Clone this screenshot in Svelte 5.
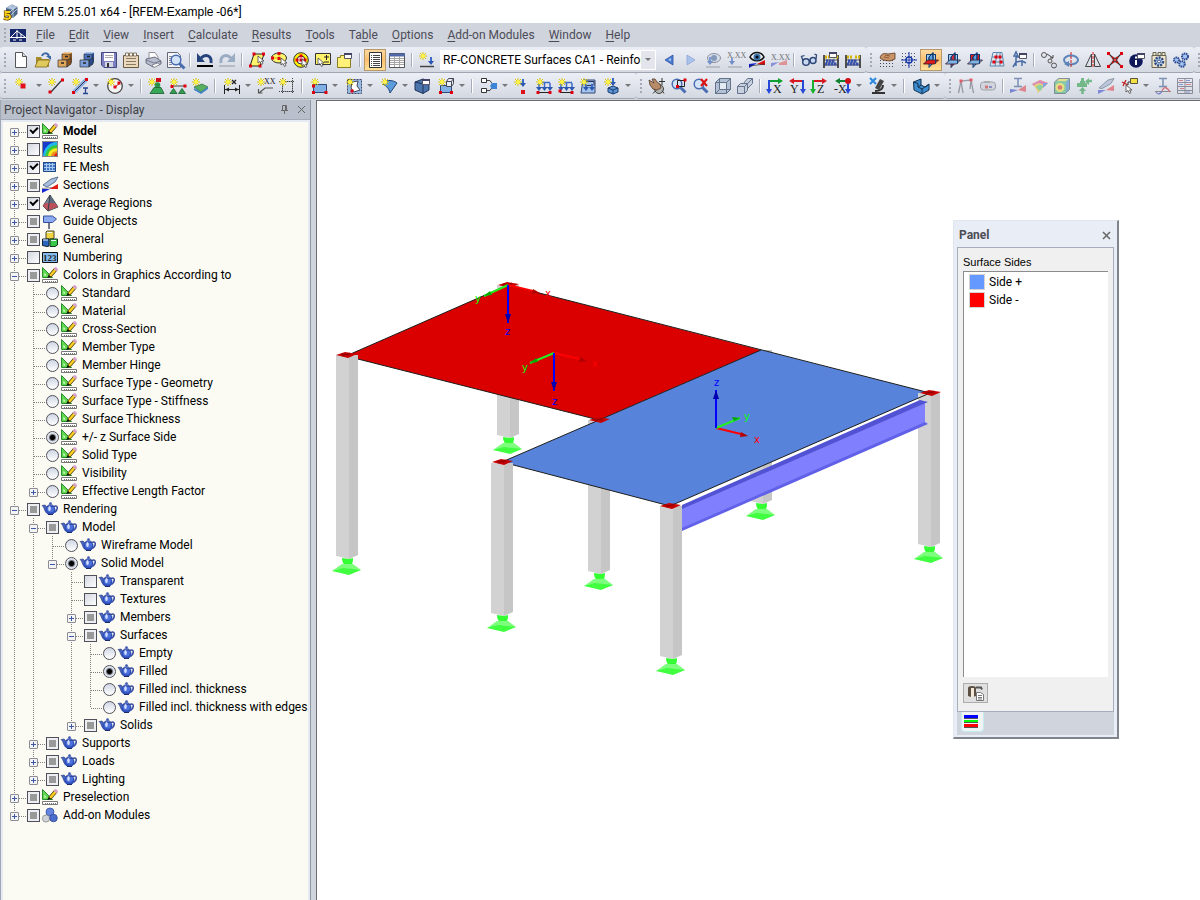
<script lang="ts">
  interface TreeNode {
    label: string;
    icon: string;
    state?: 'on' | 'off' | 'mixed';
    radio?: string;
    bold?: boolean;
    children?: TreeNode[];
    closed?: boolean;
  }

  interface Row {
    node: TreeNode;
    id: string;
    guides: boolean[];
    first: boolean;
    last: boolean;
  }

  interface Tool {
    kind: 'icon' | 'split' | 'sep' | 'case';
    icon?: string;
    active?: boolean;
    dim?: boolean;
  }

  // Shared icon fragments
  const star = (x = 4, y = 4) =>
    `<path d="M${x} ${y - 4}v8M${x - 4} ${y}h8M${x - 3} ${y - 3}l6 6M${x + 3} ${y - 3}l-6 6" stroke="#d8c400"/><circle cx="${x}" cy="${y}" r="2" fill="#fff44a"/>`;
  const node = (x: number, y: number) => `<path d="M${x - 1.5} ${y - 1.5}h3v3h-3z" fill="#e00010"/>`;
  const cursor = (x: number, y: number) =>
    `<path d="M${x} ${y}v7l2-1.5 1.5 3 1.5-1-1.5-2.5h2.5z" fill="#fff" stroke="#444" stroke-width=".8"/>`;
  const windowBox = (x: number, y: number) =>
    `<path d="M${x - 0.5} ${y + 0.5}h7v5h-7z" fill="#fff" stroke="#556"/><path d="M${x - 1} ${y + 1}h8" stroke="#446" stroke-width="2"/>`;
  const down = (x: number, y: number, h = 6) =>
    `<path d="M${x} ${y}v${h}" stroke="#3c6cc8" stroke-width="2"/><path d="M${x - 3} ${y + h - 2}h6l-3 4z" fill="#2c58b0"/>`;
  const cabinet = (light: string, base: string, dark: string) =>
    `<path d="M5 2l2-1h8v9l-2 3H5z" fill="${dark}"/><path d="M5 2h8v6H5z" fill="${base}" stroke="#333" stroke-width=".7"/><path d="M5 2l2-1.500h8.500L13 2z" fill="${light}"/><path d="M1 8h9v7H1z" fill="${light}" stroke="#333" stroke-width=".7"/><path d="M10 8l4-2v6l-4 3z" fill="${dark}" stroke="#333" stroke-width=".7"/><path d="M4 11h3M8 4.500h3" stroke="#222" stroke-width="1.500"/>`;
  const planes = (flat: string, side: string, front: string) =>
    `<path d="M3.500 2.500h9v9h-9z" fill="${front}" stroke="#123a70"/><path d="M6 5l4-4.500V11l-4 4.500z" fill="${side}" stroke="#123a70"/><path d="M.5 12l4-4h11l-4 4z" fill="${flat}" stroke="#301828" stroke-width=".8"/><path d="M8 2.500h4.500V11M6 8V5l4-4v6" stroke="#123a70"/>`;
  const abacus = `<path d="M1 16V3M15 16V3" stroke="#222" stroke-width="1.500"/><path d="M1 8h14M1 13h14" stroke="#333" stroke-width=".8"/><path d="M2 5h5M10 5h5" stroke="#d4b400" stroke-width="3" stroke-dasharray="2 1"/><path d="M3 9h9M2 12h12" stroke="#3850a8" stroke-width="3" stroke-dasharray="2.500 .5"/>`;
  const bars = `<path d="M3 4.500h11M3 5v6M14 5v6M8.500 5v6" stroke="#3c6cc8" stroke-width="1.500"/><path d="M0 9h6l-3 4zM5.500 9h6l-3 4zM11 9h6l-3 4z" fill="#2c58b0"/><path d="M2 14.500h12" stroke="#222"/>`;
  const lens = (x: number, y: number) =>
    `<path d="M${x + 3} ${y + 3}l5.500 5.500" stroke="#4a6cb0" stroke-width="3"/><circle cx="${x}" cy="${y}" r="4.800" fill="#d4e4f8" stroke="#4a6cb0" stroke-width="1.500"/>`;
  const axis = (letter: string, a: string, b: string, flip = false) =>
    flip
      ? `<path d="M13 3H5" stroke="${a}" stroke-width="2"/><path d="M5 0v6L0 3z" fill="${a}"/><path d="M14 2v10" stroke="${b}" stroke-width="2"/><path d="M11 11h6l-3 5z" fill="${b}"/><text x="1" y="15" class="serif">${letter}</text>`
      : `<path d="M3 3h8" stroke="${a}" stroke-width="2"/><path d="M11 0v6l5-3z" fill="${a}"/><path d="M2 2v10" stroke="${b}" stroke-width="2"/><path d="M-1 11h6l-3 5z" fill="${b}"/><text x="6" y="15" class="serif">${letter}</text>`;

  const icons: Record<string, string> = {
    logo: `<path d="M4 4l6-3.500L15.500 3v7L11 14l-7-2z" fill="#4c6488"/><path d="M4 4l6-3.500L15.500 3 11 6z" fill="#a9bdd6"/><path d="M8 8l5-5M9 11l6-6M11 6v8M7 2.500l5 3" stroke="#c8d6e8" stroke-width=".8"/><path d="M8 8H3.500v3c3-1 4.500 0 4.500 2s-4 2.500-6 1" stroke="#5a4500" stroke-width="3.200"/><path d="M8 8H3.500v3c3-1 4.500 0 4.500 2s-4 2.500-6 1" stroke="#ffd21c" stroke-width="1.800"/>`,
    bridge: `<path d="M0 2h16v13H0z" fill="#18286c"/><path d="M0 10.500h16M7 3v9M7 4L1 10M7 4l8 6M11 7v4M9 13h3M3 13h3" stroke="#fff"/>`,
    new: `<path d="M3 .5h6.500l4 4v11H2.500V.5z" fill="#fff" stroke="#555"/><path d="M9.500 .5v4h4" fill="#ddd" stroke="#555"/>`,
    open: `<path d="M1 15V5h5l1 2h7v8z" fill="#a88c2c"/><path d="M0 15l3-7h12l-3 7z" fill="#e0ca5c" stroke="#806a20" stroke-width=".8"/><path d="M7 4c1-3 5-4 7 0" stroke="#3c68a8" stroke-width="2"/><path d="M11 4h5v4z" fill="#3c68a8"/>`,
    cabinetOrange: cabinet('#e0a85c', '#c8873c', '#8a5520'),
    cabinetBlue: cabinet('#7ba0dc', '#4b74be', '#274a8c'),
    save: `<path d="M.5 .5h15v15H3L.5 13z" fill="#7d80c0" stroke="#44487c"/><path d="M3 1h10v8H3z" fill="#fff"/><path d="M4 3.500h8M4 5.500h8" stroke="#aaa"/><path d="M4 10h8v5H4z" fill="#d4d6e4"/><path d="M6 11h2v4H6z" fill="#333"/>`,
    notes: `<path d="M.5 3.500h15v12H.5z" fill="#ead9bd" stroke="#6c5a40"/><path d="M2.500 1h3v3h-3zM6.500 1h3v3h-3zM10.500 1h3v3h-3z" fill="#fff" stroke="#6c5a40" stroke-width=".8"/><path d="M3 6.500h10M3 9.500h10M3 12.500h10" stroke="#8c7a60"/>`,
    print: `<path d="M4 7V.5h6L13 5v3z" fill="#fff" stroke="#778" stroke-width=".8"/><path d="M1 7l9-2 6 4v3l-8 3-7-4z" fill="#b8bed0" stroke="#556" stroke-width=".8"/><path d="M1 8l8 3 7-2" stroke="#667" stroke-width=".8"/><path d="M7 13l6-2 2 1.500-6 3z" fill="#fff" stroke="#556" stroke-width=".6"/>`,
    preview: `<path d="M.5 .5h10l3 3v12H.5z" fill="#f4f6fa" stroke="#667"/><path d="M2 4.500h7M2 6.500h5M2 8.500h3M2 10.500h3M2 12.500h3" stroke="#889"/>${lens(9, 8)}`,
    undo: `<path d="M4 6c5-5 11-2 10 5" stroke="#24427c" stroke-width="3"/><path d="M0 1v9h8z" fill="#24427c"/><path d="M0 14h16" stroke="#000" stroke-width="2"/>`,
    redo: `<path d="M12 6C7 1 1 4 2 11" stroke="#9aabc4" stroke-width="3"/><path d="M16 1v9H8z" fill="#9aabc4"/><path d="M0 14h16" stroke="#b5bac4" stroke-width="2"/>`,
    selRhomb: `<path d="M5 2h10l-4 12H1z" fill="#fff36c" stroke="#222"/>${node(5, 2)}${node(14.5, 2)}${node(1.5, 14)}${node(11, 14)}${cursor(9, 4)}`,
    selEllipse: `<ellipse cx="8" cy="6" rx="7.500" ry="5" fill="#fff36c" stroke="#333"/><path d="M8 6V1M8 6H1" stroke="#d8b800"/>${node(8, 1.5)}${node(8, 6.5)}${node(1.5, 6)}${cursor(10, 6)}`,
    selRing: `<circle cx="8" cy="8" r="7.300" fill="#fff200" stroke="#333"/><circle cx="8" cy="8" r="4" fill="#f4f4f4" stroke="#333"/>${node(8, 4)}${node(8, 8)}${node(4, 8)}${node(12, 8)}${cursor(9, 7)}`,
    selPlus: `<path d="M.5 1.500h15v11H.5z" fill="#fff36c" stroke="#333"/><path d="M9 5h5M11.500 3v5M9 10h5" stroke="#222"/>${cursor(3, 6)}`,
    layers: `<path d="M.5 15.500v-10h3v-2h5v2h5v10z" fill="#fff07a" stroke="#8c7c20"/>${windowBox(8, 1)}`,
    list: `<path d="M2.500 .5h12v15h-12z" fill="#fff" stroke="#333"/><path d="M6 3.500h7M6 5.500h7M6 7.500h7M6 9.500h7M6 11.500h7M6 13.500h7" stroke="#444"/><path d="M4.500 3v11" stroke="#444" stroke-dasharray="1 1"/>`,
    table: `<path d="M.5 1.500h15v14H.5z" fill="#fff" stroke="#555"/><path d="M0 3h16" stroke="#5068a8" stroke-width="3"/><path d="M1 6.500h14M1 8.500h14M1 10.500h14M1 12.500h14M5.500 4v11M10.500 4v11" stroke="#a4a4a4"/>`,
    newCase: `${star(4, 4)}${down(12, 5, 6)}<path d="M1 14.500h14" stroke="#444" stroke-width="1.500"/>`,
    prev: `<path d="M12 3v10L4 8z" fill="#4c7cd0" stroke="#2c54a4" stroke-width=".8"/><path d="M10 6v3L7 8z" fill="#a9c8f4"/>`,
    next: `<path d="M4 3v10l8-5z" fill="#a9c2ec" stroke="#8ea6d4" stroke-width=".8"/>`,
    loadEye: `<ellipse cx="9" cy="6" rx="6.500" ry="4.500" fill="#cfdae8" stroke="#556"/><circle cx="9" cy="6" r="3" fill="#486898"/>${down(5, 5, 6)}<path d="M1 15h14" stroke="#777"/>`,
    loadValue: `<text x="0" y="6" class="tiny">X.XX</text>${down(5, 6, 5)}<path d="M1 15h14" stroke="#777"/>`,
    resultEye: `<path d="M1 5c3-6 11-6 14 0-3 5-11 5-14 0z" fill="#eef3f8" stroke="#111" stroke-width="1.500"/><circle cx="8" cy="5" r="3.500" fill="#3c74a8"/><circle cx="8" cy="5" r="1.500" fill="#001"/><path d="M0 16v-4l8-1z" fill="#1020d0"/><path d="M8 12l8-4v5z" fill="#e01010"/><path d="M0 14l16-2" stroke="#222" stroke-width=".7"/>`,
    resultValue: `<text x="0" y="8" class="tiny">X.XX</text><path d="M0 15v-4l8-1z" fill="#5060d0"/><path d="M8 11l8-3v5H8z" fill="#e06060"/>`,
    glasses: `<circle cx="5" cy="10" r="3.300" fill="#c8d8f0" stroke="#304878" stroke-width="1.500"/><circle cx="12" cy="8.500" r="3" fill="#c8d8f0" stroke="#304878" stroke-width="1.500"/><path d="M2 9L.5 4.500l3-1M15 7l.5-4-2-1M8 9l1-1" stroke="#304878" stroke-width="1.300"/>`,
    abacusWindow: `${abacus}${windowBox(7, 0)}`,
    abacus,
    gridHand: `<path d="M1 8.500h14M1 11.500h14M1 14.500h14" stroke="#445" stroke-dasharray="1 2"/><path d="M1 6c1-5 5-5 8-4l7-1v6l-5 2-7-1z" fill="#c89468" stroke="#5c3820" stroke-width=".8"/><path d="M5 5l5 1M6 3l5 1" stroke="#7c5030" stroke-width=".8"/>`,
    gridSnap: `<path d="M1 1.500h14M1 4.500h14M1 7.500h14M1 10.500h14M1 13.500h14" stroke="#556" stroke-dasharray="1 2"/><circle cx="8" cy="8" r="3" fill="#fff" stroke="#1838a8" stroke-width="1.500"/><path d="M8 0v16M0 8h16" stroke="#1838a8"/>`,
    planeXy: planes('#e01c1c', '#5ca0e0', '#a0ccf0'),
    planeYz: planes('#7cb4e8', '#c83040', '#a0ccf0'),
    planeXz: planes('#7cb4e8', '#5ca0e0', '#e02020'),
    gridPlane: `<path d="M4 .5h9L15 14H1zM3 5h11M2 10h12M8 1L6 14M11 1l0 13" stroke="#5c88ac"/>${node(7, 5)}${node(5, 10)}${node(12, 10)}${node(11, 5)}`,
    axesWindow: `<path d="M5 14V5h9M5 10l6-1v5M2 15l3-5M3 4l2-4 2 4zM11 9l4 2" stroke="#486ca4" stroke-width="1.500"/>${windowBox(9, 1)}`,
    copyNodes: `<circle cx="3" cy="3" r="2.500" stroke="#555"/><circle cx="13" cy="13.500" r="2.500" stroke="#555"/><circle cx="9" cy="9" r="2" stroke="#555"/><path d="M6 2l6 4M12 3v3H9" stroke="#444"/>`,
    rotate: `<ellipse cx="8" cy="8" rx="7" ry="4.500" stroke="#5c84b8" stroke-width="2"/><path d="M8 0v16" stroke="#d01818" stroke-dasharray="3 1"/><path d="M6 9v6l-5-3z" fill="#5c84b8"/>`,
    mirror: `<path d="M6.500 2v12.500H.5zM9.500 2v12.500h6z" stroke="#444"/><path d="M8 0v16" stroke="#d01818" stroke-dasharray="3 1"/>`,
    scale: `<path d="M1 1l14 14M15 1L1 15" stroke="#333" stroke-width="1.300"/><path d="M5 5l6 6M11 5l-6 6" stroke="#c01010" stroke-width="2"/>${node(1.5, 1.5)}${node(14.5, 1.5)}${node(1.5, 14.5)}${node(14.5, 14.5)}<circle cx="8" cy="8" r="2" fill="#e44" stroke="#333"/>`,
    info: `<circle cx="7" cy="9" r="6.800" fill="#10185c"/><path d="M7 8v5M7 4.500v2" stroke="#fff" stroke-width="2"/>${windowBox(9, 1)}`,
    settings: `<path d="M1 3.500h14v12H1zM2 .5h3v3H2zM7 .5h3v3H7zM11 .5h3v3h-3z" fill="#f0e4cc" stroke="#665"/><circle cx="8" cy="9.500" r="4" fill="#bcd0ec" stroke="#2c4c84" stroke-width="2.500" stroke-dasharray="2 1"/><circle cx="8" cy="9.500" r="1.500" fill="#fff" stroke="#2c4c84"/>`,
    gears: `<g fill="#a8c4f0" stroke="#2c4c94" stroke-width="2" stroke-dasharray="1.500 .6"><circle cx="3.500" cy="8" r="2.500"/><circle cx="12" cy="4.500" r="3"/><circle cx="9" cy="12" r="2.800"/></g>`,

    addNode: `${star(4, 4)}<path d="M5.500 5.500h5v5h-5z" fill="#e01018"/>`,
    addLine: `<path d="M3 14L14 2" stroke="#333" stroke-width="1.200"/>${star(4, 4)}${node(2, 14)}${node(14.5, 2)}`,
    addMember: `<path d="M2 14L14 2" stroke="#8cb0e0" stroke-width="4"/><path d="M2 14L14 2" stroke="#335"/>${star(4, 4)}${node(1.5, 14.5)}${node(14.5, 1.5)}<path d="M11 10h5M13.500 10v6M11 15.500h5" stroke="#284894" stroke-width="1.300"/>`,
    addArc: `<circle cx="8" cy="8" r="7.300" fill="#f4f4f4" stroke="#444" stroke-width="1.300"/>${star(4, 4)}<path d="M8 9l5-4" stroke="#c01818"/>${node(8, 9)}${node(12, 5)}`,
    addSupport: `${star(4, 4)}<path d="M8 0h5v4H8z" fill="#d01018"/><circle cx="9.500" cy="7" r="2.800" fill="#2c9448"/><path d="M2 15.500l4-6h7l3 6z" fill="#38a858" stroke="#185c2c" stroke-width=".8"/>`,
    addLineSupport: `<path d="M2 8h13" stroke="#444"/>${star(4, 4)}${node(15, 8)}${node(2, 8.5)}<path d="M0 15.500l3.500-5 3.500 5zM8.500 15.500l3.500-5 3.500 5z" fill="#30a050" stroke="#185c2c" stroke-width=".8"/>`,
    addSurfSupport: `<path d="M2 9l8-3 6 3-7 5z" fill="#58b060" stroke="#185c2c" stroke-width=".6"/><path d="M2 10l7 4 7-5v2l-7 5-7-4z" fill="#4084c8"/>${star(4, 4)}`,
    addDim: `<path d="M.5 7v9M15.500 7v9M1 11.500h14" stroke="#222"/><path d="M1 11.500l4-2v4zM15 11.500l-4-2v4z" fill="#222"/>${star(4, 4)}<path d="M8 2l4 4M12 2L8 6" stroke="#222" stroke-width="1.300"/>`,
    addValue: `<path d="M2 15l6-5h8M1.500 11v4h4" stroke="#555" stroke-width="1.200"/>${star(4, 4)}<text x="7" y="6" class="tiny">XX</text>`,
    addFrame: `<path d="M3.500 3.500h10v10h-10zM3.500 0v16M13.500 0v16M0 3.500h16M0 13.500h16" stroke="#444" stroke-dasharray="1 1"/>${star(4, 4)}`,
    addSurface: `<path d="M2.500 6.500h13v8h-13z" fill="#80b0e4" stroke="#304878"/>${star(4, 4)}${node(2.5, 14.5)}${node(15, 14.5)}${node(2.5, 8)}`,
    addOpening: `<path d="M1.500 1.500h14v14h-14z" fill="#94bce4" stroke="#446" stroke-dasharray="2 1"/><path d="M6 4l6-1-1 5 3 4-6 2-3-4z" fill="#fff" stroke="#445"/>${star(4, 4)}${node(6, 13)}`,
    addShell: `<path d="M2 6c4-5 10-4 14-1L9 15c-1-5-4-7-7-9z" fill="#5c9cdc" stroke="#204478"/>${star(4, 4)}`,
    solid: `<path d="M1 4l8-3 6 2v9l-6 3.500L1 12z" fill="#4c74ac" stroke="#1c3458"/><path d="M1 4l8 2v9.500" stroke="#1c3458"/>${windowBox(9, 1)}`,
    addSurfBox: `<path d="M2.500 7.500h11v7h-11z" fill="#80b0e4" stroke="#304878"/><path d="M8.500 3.500l2-3h5v5l-2 3h-5zM8.500 3.500h5v5M13.500 3.500l2-3" fill="#e8eef6" stroke="#445"/>${star(4, 4)}${node(2.5, 14.5)}${node(13.5, 14.5)}`,
    combine: `<path d="M.5 .5h5v4h-5zM.5 10.500h5v4h-5z" fill="#fff" stroke="#333"/><path d="M6 2.500h3l2 3M6 12.500h3l2-3" stroke="#444"/><path d="M9 8l2-3h5v6h-5z" fill="#3c84d8"/>`,
    nodeLoad: `${star(4, 4)}${down(9, 1, 6)}<path d="M7 12h4v4H7z" fill="#e01018"/>`,
    memberLoad: `${bars}${star(4, 4)}${node(2, 14.5)}${node(14, 14.5)}`,
    lineLoad: `${bars}${star(4, 4)}${node(2, 13)}${node(14, 14.5)}`,
    surfLoad: `<path d="M1 15l2-13h12v13z" fill="#a4c4ec" stroke="#304878"/><path d="M4 3.500h10v4M5 7.500h8" stroke="#335"/>${down(6, 6, 5)}${down(12, 6, 5)}${star(4, 4)}`,
    solidLoad: `<path d="M4 10l5-2 5 2v4l-5 2-5-2z" fill="#5c94d4" stroke="#1c3c70"/><path d="M4 10l5 2 5-2M9 12v4" stroke="#1c3c70"/>${down(9, 0, 6)}${star(4, 4)}`,
    pan: `<circle cx="10" cy="11" r="4.500" fill="#b4b4b0" stroke="#444"/><path d="M0 2l5 3-2-4 3 0 2 3 3 2 1 4-4 2-4-1-3-4z" fill="#b88c68" stroke="#503828" stroke-width=".8"/><path d="M13 0v7M10 3.500h6M4 15.500l3-3M15 15.500l-2-3" stroke="#333"/>`,
    zoomWindow: `${lens(6, 6)}<path d="M6.500 2.500h7v6h-7z" stroke="#222"/>${node(14, 2)}${node(6.5, 8.5)}`,
    zoomAll: `${lens(6, 6)}<path d="M8 1l6 7M14 1L8 8" stroke="#e01010" stroke-width="2"/>`,
    cube: `<path d="M.5 4.500l4-4h11v11l-4 4H.5z" fill="#b4c0d4" stroke="#64748c"/><path d="M.5 4.500h11v11M11.500 4.500l4-4M4.500 .5v11h11M.5 15.500l4-4" stroke="#64748c"/><path d="M5 5h6v6H5z" fill="#e4eaf2"/>`,
    cubes: `<path d="M.5 8.500h7v7h-7zM.5 8.500l3-3h7v7l-3 3M6.500 5.500l4-5h5v5l-5 5" fill="#c8d0e0" stroke="#64748c"/><path d="M7.500 8.500l8-8" stroke="#64748c"/>`,
    viewX: axis('X', '#10a030', '#2848d8'),
    viewY: axis('Y', '#d81820', '#2848d8', true),
    viewZ: axis('Z', '#d81820', '#18b030'),
    viewMinusX: `<path d="M12 3H4" stroke="#108030" stroke-width="2"/><path d="M5 0v6L0 3z" fill="#108030"/><path d="M13 3v9" stroke="#2848d8" stroke-width="2"/><path d="M10 11h6l-3 5z" fill="#2848d8"/><circle cx="13" cy="3" r="3" fill="#d01018"/><text x="-1" y="15" class="serif">-X</text>`,
    microscope: `<path d="M2 15h13M5 13c6 0 8-3 8-6" stroke="#333" stroke-width="2"/><path d="M5 10l5-9 4 2-5 9z" fill="#444"/><path d="M0 0l6 6M6 0L0 6" stroke="#2888e0" stroke-width="2"/>`,
    solidView: `<path d="M.5 4L8 1v6l4 2 4-3v6l-7 4-8-4z" fill="#3c8cd0" stroke="#12304c"/><path d="M8 7l-3 2 4 2 6-4M9 11v4M.5 4L5 5.500V9" stroke="#12304c"/>`,
    frame: `<path d="M.5 15L3 3l10-1 2.500 13M3 3L5 15M13 2l-1 9" stroke="#667" stroke-width="1.300"/>${node(3, 3)}${node(13, 2)}`,
    camera: `<rect x=".5" y="4" width="15" height="8" rx="3" fill="#c8ccd4" stroke="#777"/><path d="M4 3h6v2H4z" fill="#888"/><path d="M5 9h3" stroke="#c33" stroke-width="3"/><path d="M9 9h3" stroke="#55a" stroke-width="2"/>`,
    sectionRes: `<path d="M4 .5h8M8 .5v8M4 8.500h8" stroke="#38588c" stroke-width="1.500"/><path d="M0 15v-4l8 1z" fill="#3848c8"/><path d="M8 12l8-5v7z" fill="#e04850"/>`,
    surfRes: `<path d="M0 6l8-4 8 3-10 10c-1-4-3-6-6-9z" fill="#e8c030"/><path d="M0 6l8-4 8 3-3 3C8 4 4 5 2 8z" fill="#d85090"/><path d="M4 9c4-3 6-2 7 0l-3 4z" fill="#50c878"/><path d="M11 5l5 0-5 5z" fill="#4878d8"/>`,
    solidRes: `<path d="M.5 4l4-3.500h11v11l-4 4H.5z" fill="#50b878" stroke="#456"/><circle cx="6" cy="9.500" r="4.500" fill="#e8e040"/><circle cx="6" cy="9.500" r="2.300" fill="#d83828"/><path d="M12 4l3-3v10l-3 4z" fill="#4888c8"/><path d="M3 3l2-2h9l-2 2z" fill="#e8d850"/>`,
    supportRes: `<path d="M5 0h3v4H5zM1 5h10v4H1zM4 3h5v3H4z" fill="#2c9c48"/><path d="M6.500 16v-4M16 3h-3" stroke="#2c9c48" stroke-width="2.500"/><path d="M3 13h7L6.500 9zM13 0v7l-4-3.500z" fill="#2c9c48"/>`,
    bladeRes: `<path d="M1 10l9-8 6-1.500-3 5-9 5z" fill="#a4b4d0" stroke="#567"/><path d="M0 16v-4h8z" fill="#4050d0"/><path d="M8 12l8-5v6z" fill="#e04850"/>`,
    pickRes: `<path d="M8.500 .5h7v5h-7z" fill="#f4e040" stroke="#554"/><path d="M0 4l6 3M4 2L1 8" stroke="#c02020" stroke-width="1.300"/><path d="M8 4H6v3" stroke="#333"/>${cursor(4, 7)}`,
    waveRes: `<path d="M4 .5h8M8 .5v8M4 8.500h8" stroke="#38588c" stroke-width="1.500"/><path d="M0 13.500h16" stroke="#555"/><path d="M1 14c2 3 5 2 6-1" stroke="#3848c0" stroke-width="1.300"/><path d="M7 13c2-5 5-4 8 1" stroke="#d03038" stroke-width="1.300"/>`,
    gridRes: `<path d="M.5 .5h15v15H.5zM0 4.500h16M0 8.500h16M0 12.500h16M8 0v16" stroke="#556"/><path d="M2 2.500h4M9 6.500h5M3 10.500h4" stroke="#d04048"/><path d="M9 2.500h4M2 6.500h4M9 14h4" stroke="#5060c8"/>`,

    // Navigator icons
    ruler: `<path d="M.5 .5l10 10H.5z" fill="#5fd850" stroke="#2c8c30"/><path d="M2.500 6l2 2.500h-2z" fill="#fbfbf3"/><path d="M7.500 9.500L14 2" stroke="#4c4010" stroke-width="4"/><path d="M8 9L14 2" stroke="#fcd020" stroke-width="2.500"/><path d="M13 3l2-2" stroke="#d8a0d0" stroke-width="3.500"/><path d="M5 11l2-3 2 2z" fill="#111"/><path d="M.5 12.500h15v3H.5z" fill="#fff" stroke="#777"/><path d="M3 14.500h11" stroke="#777" stroke-dasharray="1 1"/>`,
    rainbow: `<path d="M0 0h16v16H0z" fill="#1838d0"/><path d="M1 16C1 7 8 0 16 1v15z" fill="#20b8e8"/><path d="M3 16C4 8 9 4 16 4v12z" fill="#38c838"/><path d="M6 16c0-6 4-9 10-9v9z" fill="#f0e820"/><path d="M9 16c0-4 3-6 7-6v6z" fill="#f08820"/><path d="M12 16c0-2 1-4 4-4v4z" fill="#e02010"/><path d="M.5 .5h15v15H.5z" stroke="#888"/>`,
    mesh: `<path d="M1 3h13v10H1z" fill="#3c74c4"/><path d="M1 5.500h13M1 8.500h13M1 11.500h13M4.500 3v10M7.500 3v10M10.500 3v10" stroke="#a8c8f0"/><path d="M1.500 3.500h12v9h-12z" stroke="#204884"/>`,
    sections: `<path d="M1 8l8-6 7-2-3 5-8 5z" fill="#a8bcdc" stroke="#445c84" stroke-width=".8"/><path d="M0 16v-4h8z" fill="#1828d0"/><path d="M7 12l9-5v5z" fill="#e01818"/><path d="M0 11.500l10-1" stroke="#889"/>`,
    pyramid: `<path d="M8 0L1 11l5 5 10-4z" fill="#78889c" stroke="#444c58"/><path d="M8 0L6 16l10-4z" fill="#5c6c80"/><path d="M3 8h10l3 4-10 3.500L1 11z" fill="#c84c54" opacity=".85"/><path d="M8 0L6 16" stroke="#343c48"/>`,
    sign: `<path d="M1.500 3h9l4 3-4 3.500h-9z" fill="#8caaf0" stroke="#34509c"/><path d="M7 10v6" stroke="#778" stroke-width="2"/>`,
    cubesColor: `<path d="M4 1l1-1h7v7l-1 1H4z" fill="#f0d440" stroke="#443"/><path d="M.5 8h6.500v7l-2 .5-4.500-1z" fill="#2c64c0" stroke="#123"/><path d="M8 8h7.500v6L13 15.500H8z" fill="#38c848" stroke="#132"/><path d="M1 9h5M9 9.500h5M5 1.500h5" stroke="#e8f4ff"/>`,
    numbers: `<path d="M.5 3.500h15v10H.5z" fill="#84bcf0" stroke="#111"/><text x="1" y="12" class="digits">123</text>`,
    teapot: `<path d="M6 13C2 11 3 7 0 4.500L3 4c2 1 1 3 4 3z" fill="#4864c0" stroke="#24367c" stroke-width=".6"/><path d="M12 5.500c4-2 4.500 3 .5 6" stroke="#34489c" stroke-width="1.500"/><ellipse cx="8.500" cy="9" rx="5" ry="5" fill="#3050b8"/><ellipse cx="8.500" cy="8" rx="3.500" ry="3.500" fill="#4c70dc"/><path d="M5 5.500c1-2.500 6-2.500 7 0z" fill="#5474d8" stroke="#24367c" stroke-width=".6"/><circle cx="8.500" cy="2.500" r="1.300" fill="#3c54b0"/><path d="M6 13.500h5" stroke="#1c2c68"/><ellipse cx="7.500" cy="7.500" rx="1.300" ry="2.500" fill="#d4e0ff"/>`,
    modules: `<circle cx="8" cy="5" r="4" fill="#6484e0" stroke="#3450a4" stroke-width=".8"/><circle cx="4" cy="11.500" r="3.600" fill="#d0d4d8" stroke="#888" stroke-width=".8"/><circle cx="11.500" cy="11" r="3.800" fill="#4c6ccc" stroke="#2c4898" stroke-width=".8"/>`,
    pipette: `<path d="M0 3q0-2 4-2t4 2v8q-4 2-8 0z" fill="#5c5044"/><path d="M3 3h3v9H3z" fill="#f4ead8"/><path d="M8 2.500h5l1 2" stroke="#555" stroke-width="2"/><path d="M8.500 7.500h4l3 2v6h-7z" fill="#fff" stroke="#777"/><path d="M10 10.500h4M10 12.500h4M10 14h4" stroke="#777"/>`,
  };

  const menus = ['File', 'Edit', 'View', 'Insert', 'Calculate', 'Results', 'Tools', 'Ta|ble', 'Options', 'Add-on Modules', 'Window', 'Help'].map(
    (name) => {
      const [pre, rest] = name.includes('|') ? name.split('|') : ['', name];
      return { pre, key: rest[0], rest: rest.slice(1) };
    }
  );

  // Toolbars: "|" separator, "+" drop-down arrow, "*" pressed, "~" disabled, "@" load case list
  function parse(def: string): Tool[] {
    return def.split(' ').map((word) => {
      if (word === '|') return { kind: 'sep' };
      if (word === '@') return { kind: 'case' };
      return {
        kind: word.includes('+') ? 'split' : 'icon',
        icon: word.replace(/[+*~]/g, ''),
        active: word.includes('*'),
        dim: word.includes('~'),
      };
    });
  }

  const toolbars: Tool[][][] = [
    [
      parse(
        'new open cabinetOrange cabinetBlue save notes print preview | undo redo | selRhomb selEllipse selRing selPlus layers | list* table | newCase @ prev next loadEye~ loadValue~ resultEye resultValue~ | glasses abacusWindow abacus'
      ),
      parse('gridHand gridSnap planeXy* planeYz planeXz gridPlane axesWindow | copyNodes rotate mirror scale info settings gears'),
      parse('list'),
    ],
    [
      parse(
        'addNode+ addLine addMember+ addArc+ | addSupport addLineSupport addSurfSupport | addDim+ addValue addFrame | addSurface+ addOpening+ addShell+ solid addSurfBox+ | combine+ nodeLoad memberLoad lineLoad surfLoad solidLoad+'
      ),
      parse('pan zoomWindow zoomAll cube cubes | viewX viewY viewZ viewMinusX+ microscope+ | solidView+'),
      parse('frame~ camera~ | sectionRes~ surfRes~ solidRes~ supportRes~ bladeRes~ pickRes+ waveRes~ gridRes~ |'),
    ],
  ];

  const color = (label: string, on = false): TreeNode => ({ label, icon: 'ruler', radio: 'colors', state: on ? 'on' : 'off' });
  const fill = (label: string, on = false): TreeNode => ({ label, icon: 'teapot', radio: 'fill', state: on ? 'on' : 'off' });

  const tree: TreeNode[] = [
    { label: 'Model', icon: 'ruler', state: 'on', bold: true, closed: true },
    { label: 'Results', icon: 'rainbow', state: 'off', closed: true },
    { label: 'FE Mesh', icon: 'mesh', state: 'on', closed: true },
    { label: 'Sections', icon: 'sections', state: 'mixed', closed: true },
    { label: 'Average Regions', icon: 'pyramid', state: 'on', closed: true },
    { label: 'Guide Objects', icon: 'sign', state: 'mixed', closed: true },
    { label: 'General', icon: 'cubesColor', state: 'mixed', closed: true },
    { label: 'Numbering', icon: 'numbers', state: 'off', closed: true },
    {
      label: 'Colors in Graphics According to',
      icon: 'ruler',
      state: 'mixed',
      children: [
        color('Standard'),
        color('Material'),
        color('Cross-Section'),
        color('Member Type'),
        color('Member Hinge'),
        color('Surface Type - Geometry'),
        color('Surface Type - Stiffness'),
        color('Surface Thickness'),
        color('+/- z Surface Side', true),
        color('Solid Type'),
        color('Visibility'),
        { ...color('Effective Length Factor'), closed: true },
      ],
    },
    {
      label: 'Rendering',
      icon: 'teapot',
      state: 'mixed',
      children: [
        {
          label: 'Model',
          icon: 'teapot',
          state: 'mixed',
          children: [
            { label: 'Wireframe Model', icon: 'teapot', radio: 'model', state: 'off' },
            {
              label: 'Solid Model',
              icon: 'teapot',
              radio: 'model',
              state: 'on',
              children: [
                { label: 'Transparent', icon: 'teapot', state: 'off' },
                { label: 'Textures', icon: 'teapot', state: 'off' },
                { label: 'Members', icon: 'teapot', state: 'mixed', closed: true },
                {
                  label: 'Surfaces',
                  icon: 'teapot',
                  state: 'mixed',
                  children: [fill('Empty'), fill('Filled', true), fill('Filled incl. thickness'), fill('Filled incl. thickness with edges')],
                },
                { label: 'Solids', icon: 'teapot', state: 'mixed', closed: true },
              ],
            },
          ],
        },
        { label: 'Supports', icon: 'teapot', state: 'mixed', closed: true },
        { label: 'Loads', icon: 'teapot', state: 'mixed', closed: true },
        { label: 'Lighting', icon: 'teapot', state: 'mixed', closed: true },
      ],
    },
    { label: 'Preselection', icon: 'ruler', state: 'mixed', closed: true },
    { label: 'Add-on Modules', icon: 'modules', state: 'mixed', closed: true },
  ];

  let folded = $state<Record<string, boolean>>({});

  function flatten(nodes: TreeNode[], guides: boolean[] = [], path = 'n'): Row[] {
    return nodes.flatMap((item, i) => {
      const last = i === nodes.length - 1;
      const id = `${path}-${i}`;
      const row = { node: item, id, guides, first: i === 0 && guides.length === 0, last };
      const below = item.children && !folded[id] ? flatten(item.children, [...guides, !last], id) : [];
      return [row, ...below];
    });
  }

  let rows = $derived(flatten(tree));

  // Columns of the frame: left edge, top, foot; back ones are drawn under the slabs
  const backColumns = [
    { x: 497, top: 285, foot: 435 },
    { x: 588, top: 420, foot: 571 },
    { x: 750, top: 350, foot: 501 },
  ];
  const frontColumns = [
    { x: 336, top: 355, foot: 556 },
    { x: 491, top: 463, foot: 613 },
    { x: 660, top: 506, foot: 656 },
    { x: 918, top: 393, foot: 544 },
  ];
  const caps = [
    [346, 355],
    [508, 285],
    [502, 462],
    [599, 420],
    [670, 506],
    [930, 393],
  ];
  const axes = [
    { x: 508, y: 285, z: 38, dir: 1, yEnd: [-24, 11], xEnd: [31, 8], yText: [-33, 17], xText: [37, 12], zText: [-3, 50] },
    { x: 554, y: 353, z: 38, dir: 1, yEnd: [-24, 10], xEnd: [32, 8], yText: [-32, 18], xText: [38, 14], zText: [-2, 52] },
    { x: 716, y: 428, z: -38, dir: -1, yEnd: [24, -10], xEnd: [31, 8], yText: [28, -8], xText: [38, 15], zText: [-2, -42] },
  ];

  const legend = [
    { label: 'Side +', color: '#6699ff' },
    { label: 'Side -', color: '#ff0000' },
  ];
</script>

{#snippet icon(name: string)}
  <svg class="icon" viewBox="0 0 16 16" fill="none" aria-hidden="true">{@html icons[name]}</svg>
{/snippet}

{#snippet column(c: { x: number; top: number; foot: number })}
  <polygon points="{c.x},{c.top} {c.x + 13},{c.top} {c.x + 13},{c.foot + 3} {c.x},{c.foot}" fill="#d2d2d2" />
  <polygon points="{c.x + 13},{c.top} {c.x + 22},{c.top} {c.x + 22},{c.foot - 1} {c.x + 13},{c.foot + 3}" fill="#c6c6c6" />
  <path d="M{c.x + 6} {c.foot + 2}l7 1 4-1q0 6-2 7h-6q-3-2-3-7z" fill="#33ff33" />
  <path d="M{c.x + 6} {c.foot + 8}h11l8 6-14 2-15-1z" fill="#7dff7d" />
  <path d="M{c.x - 4} {c.foot + 15}l11-3 9 1 9 1-12 5z" fill="#3fff3f" />
{/snippet}

<div class="app">
  <header class="title-bar">
    {@render icon('logo')}
    <h1>RFEM 5.25.01 x64 - [RFEM-<span class="file-name">Example</span> -06*]</h1>
  </header>

  <nav class="menu-bar">
    <span class="grip"></span>
    <span class="doc-icon">{@render icon('bridge')}</span>
    {#each menus as menu}
      <button type="button" class="menu">{menu.pre}<u>{menu.key}</u>{menu.rest}</button>
    {/each}
  </nav>

  {#each toolbars as line}
    <div class="toolbar-line">
      {#each line as bar}
        <div class="toolbar" role="toolbar">
          <span class="grip"></span>
          {#each bar as tool}
            {#if tool.kind === 'sep'}
              <span class="separator"></span>
            {:else if tool.kind === 'case'}
              <span class="case-list">
                <select aria-label="Load case">
                  <option>RF-CONCRETE Surfaces CA1 - Reinforcement</option>
                </select>
                <span class="case-arrow"></span>
              </span>
            {:else}
              <button
                type="button"
                class="tool"
                class:split={tool.kind === 'split'}
                class:active={tool.active}
                class:dim={tool.dim}
                aria-label={tool.icon}
              >
                {@render icon(tool.icon ?? '')}
              </button>
            {/if}
          {/each}
        </div>
      {/each}
    </div>
  {/each}

  <main class="workspace">
    <aside class="navigator">
      <div class="nav-header">
        <h2>Project Navigator - Display</h2>
        <button type="button" class="nav-button" aria-label="Pin">
          <svg width="9" height="9" viewBox="0 0 9 9" fill="none" stroke="#666"><path d="M2.500 5V.5h4V5M5.500 1v4M1 5.500h7M4.500 6v3" /></svg>
        </button>
        <button type="button" class="nav-button" aria-label="Close">
          <svg width="9" height="9" viewBox="0 0 9 9" stroke="#666"><path d="M1 1l7 7M8 1L1 8" /></svg>
        </button>
      </div>
      <div class="tree">
        {#each rows as row (row.id)}
          <div class="row">
            {#each row.guides as line}
              <span class="cell" class:through={line}></span>
            {/each}
            <span class="cell branch" class:first={row.first} class:last={row.last}>
              {#if row.node.children || row.node.closed}
                <button
                  type="button"
                  class="expander"
                  class:plus={row.node.closed || folded[row.id]}
                  aria-label="Toggle {row.node.label}"
                  onclick={() => (folded[row.id] = !folded[row.id])}
                ></button>
              {/if}
            </span>
            <label class="item" class:bold={row.node.bold}>
              {#if row.node.radio}
                <input type="radio" name={row.node.radio} checked={row.node.state === 'on'} />
              {:else}
                <input type="checkbox" checked={row.node.state === 'on'} class:mixed={row.node.state === 'mixed'} />
              {/if}
              {@render icon(row.node.icon)}
              <span>{row.node.label}</span>
            </label>
          </div>
        {/each}
      </div>
    </aside>

    <section class="canvas">
      <svg class="scene" width="883" height="640" viewBox="317 101 883 640" role="img" aria-label="Structural model">
        {#each backColumns as c}
          {@render column(c)}
        {/each}
        <polygon points="508,285 761,350 599,420 346,356" fill="#da0000" />
        <polygon points="761,350 930,393 670,506 502,462" fill="#5783db" />
        <path d="M346 356L508 285M761 350L502 462M508 285L930 393M346 356L599 420M502 462L670 506" class="edge" />
        {#each frontColumns as c}
          {@render column(c)}
        {/each}
        <path d="M670 506L930 393" class="edge" />
        <polygon points="682,507 925,403 925,424 682,529" fill="#8080ff" />
        <polygon points="682,505 920,400 928,402 682,509" fill="#5252d4" />
        <polygon points="682,528 925,422 928,424 682,531" fill="#6060e8" />
        {#each caps as [x, y]}
          <path d="M{x - 10} {y}l9-3 12 2-9 4z" fill="#c80000" />
          <path d="M{x - 5} {y - 1}l9 1M{x - 4} {y + 1}l8-3" stroke="#800" stroke-width=".8" />
        {/each}
        {#each axes as a}
          <g transform="translate({a.x} {a.y})" fill="none" stroke-width="2">
            <path d="M0 0L{a.xEnd[0] - 6} {a.xEnd[1] - 2}" stroke="#f00" />
            <path d="M{a.xEnd[0] + 1} {a.xEnd[1]}l-8 1 1-5z" fill="#b00000" />
            <path d="M0 0L{a.yEnd[0]} {a.yEnd[1]}" stroke="#2e2" />
            <path d="M{a.yEnd[0]} {a.yEnd[1]}l{a.dir * 8} -1 {a.dir * -2} {a.dir * -4}z" fill="#00a800" />
            <path d="M0 0v{a.z}" stroke="#00f" />
            <path d="M0 {a.z}l-3 {a.dir * -9}h6z" fill="#0000b0" />
            <text x={a.xText[0]} y={a.xText[1]} fill="#f00">x</text>
            <text x={a.yText[0]} y={a.yText[1]} fill="#0f0">y</text>
            <text x={a.zText[0]} y={a.zText[1]} fill="#00f">z</text>
          </g>
        {/each}
      </svg>

      <div class="panel">
        <div class="panel-header">
          <h2>Panel</h2>
          <button type="button" class="nav-button" aria-label="Close panel">
            <svg width="9" height="9" viewBox="0 0 9 9" stroke="#666" stroke-width="1.500"><path d="M1 1l7 7M8 1L1 8" /></svg>
          </button>
        </div>
        <div class="panel-body">
          <h3>Surface Sides</h3>
          <ul class="legend">
            {#each legend as entry}
              <li><span class="swatch" style="background: {entry.color}"></span>{entry.label}</li>
            {/each}
          </ul>
          <button type="button" class="panel-tool" aria-label="Color settings">{@render icon('pipette')}</button>
        </div>
        <div class="panel-tabs">
          <button type="button" class="panel-tab" aria-label="Color scale">
            <span class="bar blue"></span>
            <span class="bar green"></span>
            <span class="bar red"></span>
          </button>
        </div>
      </div>
    </section>
  </main>
</div>

<style>
  :global(body) {
    margin: 0;
    background: #d0d4dd;
  }

  .app {
    display: flex;
    flex-direction: column;
    min-height: 100vh;
    overflow: hidden;
    font-family: Roboto, 'Open Sans', sans-serif;
    font-size: 12px;
    line-height: 16px;
    color: #000;
    background: #d0d4dd;
  }

  h1,
  h2,
  h3 {
    margin: 0;
    font-size: 12px;
    font-weight: 400;
  }

  button {
    margin: 0;
    padding: 0;
    border: none;
    background: transparent;
    font: inherit;
    color: inherit;
  }

  .icon {
    flex: none;
    width: 16px;
    height: 16px;
    overflow: visible;
  }

  .icon :global(text) {
    fill: #222;
    font-family: 'Liberation Serif', serif;
  }

  .icon :global(.serif) {
    font-size: 12px;
  }

  .icon :global(.tiny) {
    font-size: 8px;
  }

  .icon :global(.digits) {
    font-size: 9px;
    font-weight: 700;
  }

  /* Title and menu */
  .title-bar {
    display: flex;
    align-items: center;
    gap: 5px;
    height: 23px;
    padding-left: 2px;
    background: #fff;
  }

  .title-bar h1 {
    white-space: pre;
  }

  .file-name {
    font-family: 'Liberation Sans', sans-serif;
  }

  .menu-bar {
    display: flex;
    align-items: center;
    height: 24px;
    color: #4c4c58;
  }

  .doc-icon {
    display: flex;
    margin-right: 3px;
  }

  .menu {
    padding: 0 7px;
    white-space: nowrap;
  }

  .menu u {
    text-underline-offset: 2px;
  }

  .grip {
    flex: none;
    width: 10px;
    height: 16px;
    background: repeating-linear-gradient(#a4a9b5 0 2px, transparent 2px 4px) 4px 1px / 2px 14px no-repeat;
  }

  /* Toolbars */
  .toolbar-line {
    display: flex;
    height: 26px;
    overflow: hidden;
  }

  .toolbar {
    display: flex;
    flex: none;
    align-items: center;
    box-sizing: border-box;
    height: 26px;
    padding-right: 2px;
    border-bottom: 1px solid #a0a5b2;
    border-radius: 3px;
    background: linear-gradient(#eceff6, #d4d8e1);
  }

  .toolbar:last-child {
    flex: 1 0 auto;
  }

  .tool {
    display: flex;
    flex: none;
    align-items: center;
    justify-content: center;
    box-sizing: border-box;
    width: 22px;
    height: 22px;
  }

  .tool.split {
    justify-content: flex-start;
    gap: 5px;
    width: 35px;
    padding-left: 5px;
  }

  .tool.split::after {
    content: '';
    border: 3px solid transparent;
    border-top-color: #777;
    border-bottom: none;
  }

  .tool.active {
    border: 1px solid #b89868;
    background: linear-gradient(#fdd9a0, #fbc06c 50%, #fee29a);
  }

  .tool.dim .icon {
    opacity: 0.6;
  }

  .separator {
    flex: none;
    width: 2px;
    height: 14px;
    margin: 0 3px;
    background: linear-gradient(90deg, #a8acb8 50%, #fff 50%);
  }

  .case-list {
    display: flex;
    box-sizing: border-box;
    width: 216px;
    height: 20px;
    margin: 0 2px;
    padding: 1px;
    background: #fff;
  }

  .case-list select {
    flex: 1;
    min-width: 0;
    padding: 0 0 0 2px;
    border: none;
    background: #fff;
    appearance: none;
    font: inherit;
    color: #000;
  }

  .case-arrow {
    display: flex;
    align-items: center;
    justify-content: center;
    width: 14px;
    background: #e2e5ec;
  }

  .case-arrow::after {
    content: '';
    border: 3px solid transparent;
    border-top-color: #777;
    border-bottom: none;
  }

  /* Project navigator */
  .workspace {
    display: flex;
    flex: 1;
    padding-top: 1px;
  }

  .navigator {
    display: flex;
    flex: 0 0 311px;
    flex-direction: column;
    box-sizing: border-box;
    min-width: 0;
    border-right: 1px solid #9096a2;
    border-left: 1px solid #a0a6b4;
    background: #e6eaf2;
  }

  .nav-header {
    display: flex;
    align-items: center;
    gap: 8px;
    height: 19px;
    padding: 0 4px 0 3px;
    border-bottom: 1px solid #a4abb8;
    background: #b9c0cb;
    color: #404048;
  }

  .nav-header h2 {
    flex: 1;
  }

  .nav-button {
    display: flex;
  }

  .tree {
    flex: 1;
    margin: 2px 2px 0;
    background: #fbfbf3;
  }

  .row {
    display: flex;
    height: 18px;
    padding-left: 2px;
  }

  .cell {
    position: relative;
    flex: none;
    width: 19px;
  }

  .cell.through,
  .branch::before {
    background: repeating-linear-gradient(#808080 0 1px, transparent 1px 2px) 9px 0 / 1px 100% no-repeat;
  }

  .branch::before,
  .branch::after {
    content: '';
    position: absolute;
  }

  .branch::before {
    inset: 0;
  }

  .branch.first::before {
    top: 10px;
  }

  .branch.last::before {
    bottom: 8px;
  }

  .branch::after {
    top: 10px;
    right: -2px;
    left: 10px;
    height: 1px;
    background: repeating-linear-gradient(90deg, #808080 0 1px, transparent 1px 2px);
  }

  .expander {
    position: absolute;
    top: 6px;
    left: 5px;
    z-index: 1;
    width: 9px;
    height: 9px;
    border: 1px solid #8c8c94;
    border-radius: 1px;
    box-sizing: border-box;
    background: linear-gradient(#3c58a8, #3c58a8) 1px 3px / 5px 1px no-repeat, #f4f4f4;
  }

  .expander.plus {
    background:
      linear-gradient(#3c58a8, #3c58a8) 1px 3px / 5px 1px no-repeat,
      linear-gradient(#3c58a8, #3c58a8) 3px 1px / 1px 5px no-repeat,
      #f4f4f4;
  }

  .item {
    display: flex;
    align-items: center;
    padding-left: 3px;
    white-space: nowrap;
  }

  .item.bold {
    font-weight: 700;
  }

  .item .icon {
    margin: 0 5px 0 2px;
  }

  .item input {
    flex: none;
    width: 13px;
    height: 13px;
    margin: 0;
    border: 1px solid #50505a;
    appearance: none;
    background: linear-gradient(135deg, #d4d8e0, #fdfdff);
  }

  .item input.mixed {
    background: linear-gradient(#999, #999) center / 7px 7px no-repeat, #eceef2;
  }

  .item input[type='checkbox']:checked {
    display: flex;
    align-items: center;
    justify-content: center;
  }

  .item input[type='checkbox']:checked::after {
    content: '';
    width: 6px;
    height: 3px;
    margin-bottom: 3px;
    border: solid #000;
    border-width: 0 0 2px 2px;
    transform: rotate(-45deg);
  }

  .item input[type='radio'] {
    border-radius: 50%;
    background: linear-gradient(#cfd6e4, #fff);
  }

  .item input[type='radio']:checked {
    background: radial-gradient(circle, #000 0 2px, #d4dae6 4px, #f4f6fa 6px);
  }

  /* Model view */
  .canvas {
    position: relative;
    flex: 1;
    min-width: 0;
    margin-left: 5px;
    overflow: hidden;
    border-top: 1px solid #6c6c70;
    border-left: 1px solid #6c6c70;
    background: #fff;
  }

  .scene {
    display: block;
  }

  .scene .edge {
    fill: none;
    stroke: #1c1c1c;
  }

  .scene text {
    font-family: 'DejaVu Sans', sans-serif;
    font-size: 10px;
  }

  .panel {
    position: absolute;
    top: 119px;
    right: 81px;
    display: flex;
    flex-direction: column;
    box-sizing: border-box;
    width: 166px;
    height: 519px;
    padding: 2px;
    border: 1px solid #e2e6f0;
    border-right: 2px solid #80848c;
    border-bottom: 2px solid #80848c;
    background: #e9edf6;
  }

  .panel-header {
    display: flex;
    align-items: center;
    justify-content: space-between;
    height: 24px;
    padding: 0 4px 0 3px;
  }

  .panel-header h2 {
    font-weight: 700;
    color: #4c4c54;
  }

  .panel-body {
    display: flex;
    flex: 1;
    flex-direction: column;
    margin: 0 1px;
    padding: 6px 5px 8px;
    border: 1px solid #a6adbd;
    background: #f0f0f0;
  }

  .panel-body h3 {
    font-family: 'Liberation Sans', sans-serif;
    font-size: 11px;
  }

  .legend {
    flex: 1;
    margin: 1px 0 6px;
    padding: 1px 5px;
    border-top: 1px solid #8c8c90;
    border-left: 1px solid #8c8c90;
    background: #fff;
    list-style: none;
  }

  .legend li {
    display: flex;
    align-items: center;
    gap: 4px;
    height: 18px;
    font-size: 12px;
  }

  .swatch {
    width: 14px;
    height: 14px;
    border: 1px solid #d4d4d4;
  }

  .panel-tool {
    display: flex;
    align-items: center;
    justify-content: center;
    box-sizing: border-box;
    width: 25px;
    height: 20px;
    border: 1px solid #acacac;
    background: #e0e0e0;
  }

  .panel-tabs {
    height: 23px;
    margin: 0 1px;
    padding-left: 4px;
    background: #d0d4dd;
  }

  .panel-tab {
    display: flex;
    flex-direction: column;
    gap: 1px;
    box-sizing: border-box;
    width: 23px;
    height: 20px;
    padding: 3px 2px;
    border: 1px solid #c4ecec;
    border-top: none;
    border-radius: 0 0 4px 4px;
    background: #f0f2f4;
  }

  .bar {
    box-sizing: border-box;
    width: 14px;
    height: 4px;
    border-bottom: 1px solid #555;
  }

  .bar.blue {
    background: #00f;
  }

  .bar.green {
    background: #0f0;
  }

  .bar.red {
    background: #f00;
  }
</style>
